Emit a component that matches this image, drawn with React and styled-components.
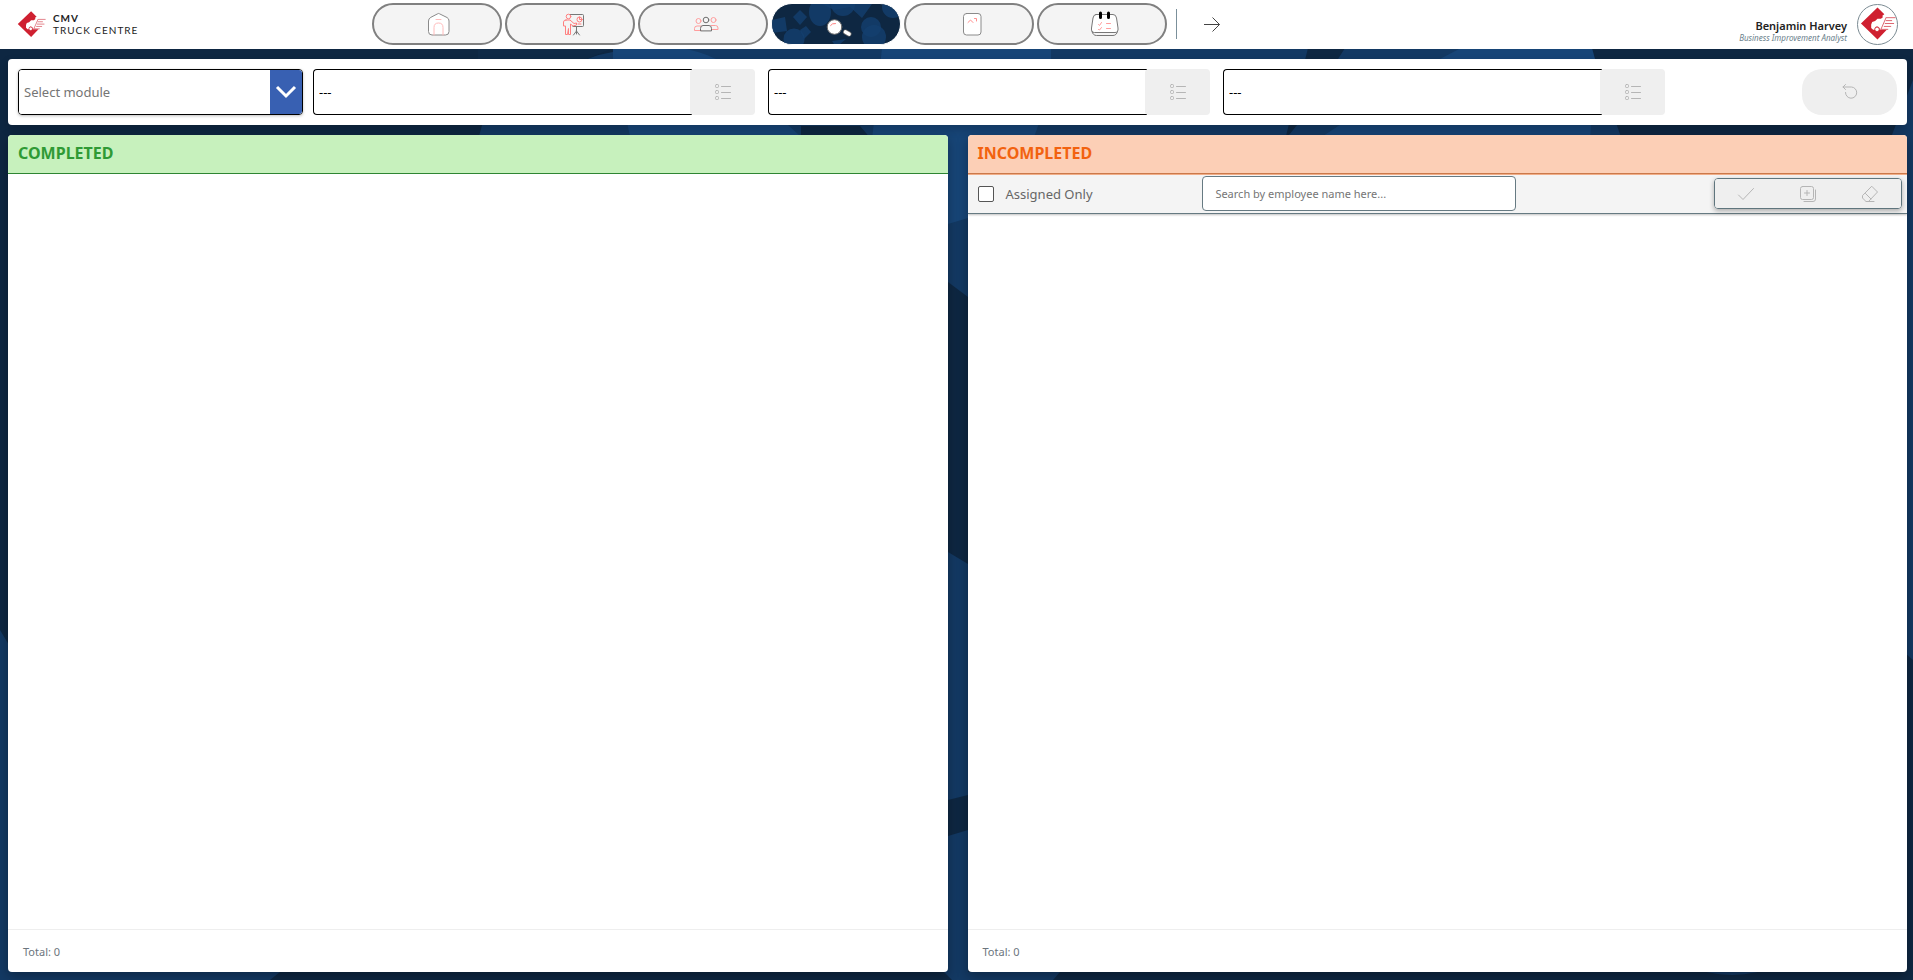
import React from "react";
import styled, { createGlobalStyle, css } from "styled-components";

const GlobalStyle = createGlobalStyle`
  *, *::before, *::after { box-sizing: border-box; }
  html, body, #root { height: 100%; }
  body {
    margin: 0;
    background: #0e2742;
    color: #222;
    font-family: "Noto Sans", "Open Sans", sans-serif;
    font-size: 13px;
  }
  button, input, select { font: inherit; }
`;

const Page = styled.div`
  position: relative;
  isolation: isolate;
  min-height: 100vh;
  display: flex;
  flex-direction: column;
`;

const Backdrop = styled.svg`
  position: absolute;
  inset: 0;
  width: 100%;
  height: 100%;
  z-index: -1;
`;

const Header = styled.header`
  display: grid;
  grid-template-columns: 354px 1fr auto;
  align-items: center;
  height: 49px;
  padding: 0 15px 1px 17px;
  background: #fff;
`;

const Brand = styled.a`
  display: flex;
  align-items: center;
  gap: 7px;
  color: #1d1d1d;
  text-decoration: none;
`;

const BrandName = styled.span`
  display: flex;
  flex-direction: column;
  font-family: Lato, sans-serif;
  font-size: 10px;
  line-height: 12px;
  letter-spacing: 1px;
`;

const Nav = styled.nav`
  display: flex;
  align-items: center;
  gap: 3px;
  padding-left: 1px;
`;

const NavButton = styled.button`
  position: relative;
  display: flex;
  align-items: center;
  justify-content: center;
  width: 130px;
  height: 42px;
  padding: 0 0 0 6px;
  border: 2px solid #808080;
  border-radius: 21px;
  background: #f4f4f4;
  overflow: hidden;
  ${(p) =>
    p.$active &&
    css`
      border: 1px solid #fff;
      background: #0e2742;
    `}
`;

const PillArt = styled.svg`
  position: absolute;
  inset: 0;
  width: 100%;
  height: 100%;
`;

const NavIcon = styled.svg`
  position: relative;
  width: 30px;
  height: 30px;
  fill: none;
  stroke-width: 1;
  stroke-linecap: round;
  stroke-linejoin: round;
`;

const Divider = styled.span`
  width: 1px;
  height: 30px;
  margin-left: 6px;
  background: #7b909b;
`;

const NextButton = styled.button`
  display: flex;
  margin-left: 22px;
  padding: 0;
  border: 0;
  background: none;
`;

const User = styled.div`
  display: flex;
  align-items: center;
  gap: 10px;
`;

const UserText = styled.div`
  display: flex;
  flex-direction: column;
  align-items: flex-end;
  padding-top: 13px;
`;

const UserName = styled.span`
  font-size: 11px;
  font-weight: 600;
  line-height: 14px;
`;

const UserRole = styled.span`
  font-size: 8px;
  font-style: italic;
  line-height: 10px;
  color: #6b818c;
`;

const Avatar = styled.span`
  display: flex;
  align-items: center;
  justify-content: center;
  width: 41px;
  height: 41px;
  border: 1px solid #7b8b93;
  border-radius: 50%;
`;

const Main = styled.main`
  flex: 1;
  display: flex;
  flex-direction: column;
  gap: 10px;
  padding: 10px 6px 8px 8px;
`;

const Filters = styled.form`
  display: grid;
  grid-template-columns: 285fr 445fr 445fr 445fr 219fr;
  gap: 10px;
  padding: 10px;
  border-radius: 4px;
  background: #fff;
  box-shadow: 0 4px 10px rgba(0, 0, 0, 0.2);
`;

const SelectBox = styled.div`
  position: relative;
  display: flex;
  height: 46px;
  border: 1px solid #000;
  border-radius: 4px;
  overflow: hidden;
  box-shadow: 0 1px 3px rgba(0, 0, 0, 0.25);
`;

const ModuleSelect = styled.select`
  flex: 1;
  appearance: none;
  padding: 0 5px;
  border: 0;
  background: #fff;
  color: #757575;
`;

const SelectArrow = styled.span`
  position: absolute;
  inset: 0 0 0 auto;
  display: flex;
  align-items: center;
  justify-content: center;
  width: 32px;
  background: #3860b2;
  pointer-events: none;
`;

const Field = styled.div`
  display: flex;
  height: 46px;
  padding-right: 3px;
`;

const FieldInput = styled.input`
  flex: 1;
  min-width: 0;
  padding: 0 5px;
  border: 1px solid #000;
  border-right: 0;
  border-radius: 4px 0 0 4px;
  background: #fff;
  color: #000;
`;

const FieldButton = styled.button`
  display: flex;
  align-items: center;
  justify-content: center;
  width: 65px;
  margin-left: -2px;
  padding: 0;
  border: 0;
  border-radius: 4px;
  background: #efefef;
`;

const ResetButton = styled.button`
  justify-self: end;
  display: flex;
  align-items: center;
  justify-content: center;
  width: 95px;
  height: 46px;
  padding: 0;
  border: 0;
  border-radius: 20px;
  background: #efefef;
`;

const Panels = styled.div`
  flex: 1;
  display: grid;
  grid-template-columns: 1fr 1fr;
  gap: 20px;
`;

const Panel = styled.section`
  display: flex;
  flex-direction: column;
  border-radius: 4px;
  background: #fff;
  overflow: hidden;
  box-shadow: 0 4px 12px rgba(0, 0, 0, 0.3);
`;

const tones = {
  done: { back: "#c7f1bd", ink: "#2f9a35", line: "#2e8532" },
  open: { back: "#fccfb6", ink: "#f2620f", line: "#cf7b4c" },
};

const PanelTitle = styled.h2`
  height: 39px;
  margin: 0;
  padding: 0 10px;
  border-bottom: 1px solid ${(p) => tones[p.$tone].line};
  background: ${(p) => tones[p.$tone].back};
  color: ${(p) => tones[p.$tone].ink};
  font-size: 16px;
  font-weight: 700;
  line-height: 36px;
`;

const Tools = styled.div`
  display: grid;
  grid-template-columns: 3fr 4fr 5fr;
  align-items: center;
  height: 40px;
  padding-bottom: 1px;
  border-top: 1px solid #f0ad88;
  border-bottom: 1px solid #667a82;
  background: #f4f4f4;
  box-shadow: 0 1px 2px rgba(0, 0, 0, 0.25);
`;

const CheckLabel = styled.label`
  display: flex;
  align-items: center;
  gap: 12px;
  padding-left: 10px;
  color: #666;
`;

const Check = styled.input`
  appearance: none;
  width: 16px;
  height: 16px;
  margin: 0;
  border: 1px solid #555;
  border-radius: 2px;
  background: #fff;
`;

const Search = styled.input`
  width: 100%;
  height: 35px;
  padding: 0 12px;
  border: 1px solid #667a82;
  border-radius: 4px;
  background: #fff;
  font-size: 11px;
  &::placeholder { color: #757575; opacity: 1; }
`;

const Actions = styled.div`
  justify-self: end;
  display: grid;
  grid-template-columns: repeat(3, 1fr);
  width: 48%;
  height: 31px;
  margin-right: 5px;
  border: 1px solid #5f757d;
  border-radius: 4px;
  overflow: hidden;
  box-shadow: 0 2px 5px rgba(0, 0, 0, 0.3);
`;

const ActionButton = styled.button`
  display: flex;
  align-items: center;
  justify-content: center;
  padding: 0;
  border: 0;
  background: #efefef;
`;

const MutedIcon = styled.svg`
  width: 18px;
  height: 18px;
  fill: none;
  stroke: #b5b5b5;
  stroke-width: 1;
  stroke-linecap: round;
  stroke-linejoin: round;
`;

const PanelBody = styled.div`
  flex: 1;
`;

const PanelFooter = styled.footer`
  height: 43px;
  padding: 0 15px;
  border-top: 1px solid #eee;
  color: #6c757d;
  font-size: 11px;
  line-height: 43px;
`;

const RED = "#ff9d9d";
const GREY = "#8a8a8a";

function BackdropArt() {
  return (
    <Backdrop viewBox="0 0 1913 980" preserveAspectRatio="none" aria-hidden="true">
      <g fill="#133963">
        <path d="M587 59Q613 49 650 48H1308L1285 140H1033L1025 220 948 282V140H872L860 126H801V140H478L500 59Z" />
        <path d="M1338 59L1345 48H1590L1622 140H1285L1317 100Z" />
        <path d="M948 282L968 297V135H948Z" />
        <path d="M948 552L968 564V795L948 800Z" />
        <path d="M948 836L968 830V972H1060L1053 980H952L944 972Z" />
        <path d="M0 630L12 650V972H280L270 980H0Z" />
        <path d="M1913 80L1890 140V640L1913 660Z" />
        <ellipse cx="1732" cy="940" rx="64" ry="35" />
      </g>
      <path d="M478 100V48H613L587 59 570 90V100Z" fill="#0f2a47" />
      <g fill="#174577">
        <path d="M613 48H680Q700 51 716 59L800 136H630L613 60Z" />
        <path d="M882 48H1051V90L1033 140H872Z" />
        <path d="M1461 48H1592L1595 59 1590 140H1317L1440 59Z" />
        <path d="M948 135H968V218L948 224Z" />
      </g>
    </Backdrop>
  );
}

function Emblem({ size }) {
  return (
    <svg width={size} height={size} viewBox="0 0 37 36" aria-hidden="true">
      <path
        fill="#cf2030"
        d="M18 1L25 8 23 9.500 23.500 11 21.500 12.500H18L15.500 15 12.500 16 11.500 18.500V22L13.500 24H15Q15 20.500 17.500 20.500T20.500 24H27.500L18 34 1 17.500Z"
      />
      <circle cx="17.500" cy="23.500" r="2.300" fill="#fff" stroke="#cf2030" strokeWidth="0.800" />
      <g stroke="#d9525e" strokeWidth="0.900" fill="none">
        <path d="M27 11.500H36.500M26.500 14.500H33M25.500 17.500H35M24.500 20.500H32M21 23.500H29" />
        <path d="M27 11L21.500 23.500" />
      </g>
    </svg>
  );
}

function HomeIcon() {
  return (
    <NavIcon viewBox="0 0 30 30" aria-hidden="true">
      <path d="M12.500 4.800Q13.500 4 14.500 4.800L22 8.500Q24 9.500 24 12V22.500Q24 26 20.500 26H7Q3.500 26 3.500 22.500V12Q3.500 9.500 5.500 8.500Z" stroke={GREY} fill="#fff" />
      <path d="M9 26V18.500Q9 14 13.500 14T18 18.500V26M11 10.500H16" stroke="#ffbcbc" />
    </NavIcon>
  );
}

function TrainingIcon() {
  return (
    <NavIcon viewBox="0 0 30 30" aria-hidden="true">
      <path d="M12 5.500H24.500Q25.500 5.500 25.500 6.500V16.500Q25.500 17.500 24.500 17.500H15M18.500 18V22L15.500 26M18.500 22L21.500 26M18.500 22V25" stroke="#777" />
      <circle cx="10.500" cy="7.500" r="2.300" stroke="#ff7f7f" />
      <path d="M8 11H12L16 14.500 18.500 14V16L15 17 12.500 15V25.500H10.500V19.500L9.500 25.500H7.500V17H5.500V13Q5.500 11 8 11Z" stroke="#ff7f7f" />
      <circle cx="21.500" cy="10.500" r="2.500" stroke="#ff7f7f" />
      <path d="M21.500 8V10.500H24M20 15H23" stroke="#ff7f7f" />
    </NavIcon>
  );
}

function TeamIcon() {
  return (
    <NavIcon viewBox="0 0 30 30" aria-hidden="true">
      <g stroke={RED}>
        <circle cx="7.500" cy="12" r="2.500" />
        <circle cx="22.500" cy="11" r="2.500" />
        <path d="M10 21.500H3.500V19.500Q3.500 17 6 17H10M20 16.500H24.500Q27 16.500 27 19V20.500H21" />
      </g>
      <g stroke="#6f6f6f">
        <circle cx="15" cy="11" r="2.800" />
        <path d="M9.500 21.500V19.500Q9.500 16.500 12 16.500H18Q20.500 16.500 20.500 19.500V21.500Z" />
      </g>
    </NavIcon>
  );
}

function SearchIcon() {
  return (
    <NavIcon viewBox="0 0 30 30" aria-hidden="true">
      <circle cx="10.500" cy="18" r="7.300" fill="#fff" stroke="#6b6b6b" />
      <path d="M6.500 16.500Q8 14 11.500 14.500" stroke="#ff7f7f" />
      <path d="M21.500 23L25 25" stroke="#6b6b6b" strokeWidth="5" />
      <path d="M21.500 23L25 25" stroke="#fff" strokeWidth="3.600" />
    </NavIcon>
  );
}

function DocumentIcon() {
  return (
    <NavIcon viewBox="0 0 30 30" aria-hidden="true">
      <rect x="6.500" y="4.500" width="17.500" height="21.500" rx="3" fill="#fff" stroke={GREY} />
      <path d="M11 13.500L13.500 11 16 13.500M17.500 9.500H19.500V12" stroke="#ff8d8d" />
    </NavIcon>
  );
}

function CalendarIcon() {
  return (
    <NavIcon viewBox="0 0 30 30" aria-hidden="true">
      <path d="M6 5.500H23Q26 5.500 26.500 9L28 19Q28.500 23.500 25 23.500H4.500Q1 23.500 1.500 19L3 9Q3.500 5.500 6 5.500Z" fill="#fff" stroke="#777" />
      <path d="M2 22.500Q3 26.500 6.500 26.500H23Q26.500 26.500 27.500 22.500" stroke="#777" />
      <path d="M10.500 4V8.500M18.500 4V8.500" stroke="#000" strokeWidth="3" />
      <path d="M8.500 15.500L9.500 16.500 11.500 13.500M8.500 20.500L9.500 21 11.500 18.500M16.500 14.500H20.500M16.500 19.500H20.500" stroke={RED} />
    </NavIcon>
  );
}

function ActivePillArt() {
  return (
    <PillArt viewBox="0 0 128 40" preserveAspectRatio="none" aria-hidden="true">
      <g fill="#14406f" fillOpacity="0.800">
        <path d="M0 16L13 13 15 27 0 29Z" />
        <path d="M28 6L35 13 28 21 21 13Z" />
        <circle cx="22" cy="35" r="10.500" />
        <path d="M28 26L34 22 39 28 32 35Z" />
        <ellipse cx="48" cy="8" rx="11" ry="14" />
        <circle cx="71" cy="0" r="12" />
        <path d="M50 0H100L90 14 78 3 62 6Z" />
        <circle cx="99" cy="23" r="10" />
        <ellipse cx="102" cy="33" rx="12" ry="12" />
        <circle cx="121" cy="3" r="11" />
        <path d="M60 37L74 35 68 40H62Z" />
      </g>
    </PillArt>
  );
}

const ListIcon = () => (
  <MutedIcon viewBox="0 0 18 18" aria-hidden="true">
    <rect x="1.500" y="1.500" width="3" height="3" rx="1" />
    <rect x="1.500" y="7.500" width="3" height="3" rx="1" />
    <rect x="1.500" y="13.500" width="3" height="3" rx="1" />
    <path d="M7.500 3.500H16.500M7.500 9.500H16.500M7.500 15.500H16.500" />
  </MutedIcon>
);

const UndoIcon = () => (
  <MutedIcon viewBox="0 0 18 18" aria-hidden="true">
    <path d="M4.500 1.500L2 4 4.500 6.500M2 4H10.500A5.600 5.600 0 1 1 4.500 9.500" />
  </MutedIcon>
);

const CheckIcon = () => (
  <MutedIcon viewBox="0 0 18 18" aria-hidden="true">
    <path d="M1.500 10L6 14.500 16.500 3.500" />
  </MutedIcon>
);

const AddIcon = () => (
  <MutedIcon viewBox="0 0 18 18" aria-hidden="true">
    <rect x="1.500" y="1.500" width="13" height="13" rx="2" />
    <path d="M8 5.500V10.500M5.500 8H10.500M16.500 5V14Q16.500 16.500 14 16.500H5" />
  </MutedIcon>
);

const EraserIcon = () => (
  <MutedIcon viewBox="0 0 18 18" aria-hidden="true">
    <path d="M11 1.500L16.500 7 7.500 16.500H5L1.500 13V11ZM4.500 8.500L10 14M5 16.500H13" />
  </MutedIcon>
);

const navItems = [
  { label: "Home", Icon: HomeIcon },
  { label: "Training", Icon: TrainingIcon },
  { label: "Team", Icon: TeamIcon },
  { label: "Search", Icon: SearchIcon, active: true },
  { label: "Documents", Icon: DocumentIcon },
  { label: "Schedule", Icon: CalendarIcon },
];

const fields = ["First filter", "Second filter", "Third filter"];

export default function App() {
  return (
    <>
      <GlobalStyle />
      <Page>
        <BackdropArt />
        <Header>
          <Brand href="#">
            <Emblem size={29} />
            <BrandName>
              <b>CMV</b>
              <span>TRUCK CENTRE</span>
            </BrandName>
          </Brand>
          <Nav>
            {navItems.map(({ label, Icon, active }) => (
              <NavButton key={label} type="button" aria-label={label} $active={active}>
                {active && <ActivePillArt />}
                <Icon />
              </NavButton>
            ))}
            <Divider />
            <NextButton type="button" aria-label="Next">
              <svg width="20" height="20" viewBox="0 0 20 20" fill="none" stroke="#444" aria-hidden="true">
                <path d="M2 10.500H17.500M10.500 3.500L17.500 10.500 10.500 17.500" />
              </svg>
            </NextButton>
          </Nav>
          <User>
            <UserText>
              <UserName>Benjamin Harvey</UserName>
              <UserRole>Business Improvement Analyst</UserRole>
            </UserText>
            <Avatar>
              <Emblem size={36} />
            </Avatar>
          </User>
        </Header>
        <Main>
          <Filters>
            <SelectBox>
              <ModuleSelect aria-label="Module" defaultValue="">
                <option value="">Select module</option>
              </ModuleSelect>
              <SelectArrow>
                <svg width="22" height="14" viewBox="0 0 22 14" fill="none" stroke="#fff" strokeWidth="3" aria-hidden="true">
                  <path d="M2 2L11 11 20 2" />
                </svg>
              </SelectArrow>
            </SelectBox>
            {fields.map((label) => (
              <Field key={label}>
                <FieldInput aria-label={label} defaultValue="---" readOnly />
                <FieldButton type="button" aria-label={`${label} list`} disabled>
                  <ListIcon />
                </FieldButton>
              </Field>
            ))}
            <ResetButton type="button" aria-label="Reset" disabled>
              <UndoIcon />
            </ResetButton>
          </Filters>
          <Panels>
            <Panel>
              <PanelTitle $tone="done">COMPLETED</PanelTitle>
              <PanelBody />
              <PanelFooter>Total: 0</PanelFooter>
            </Panel>
            <Panel>
              <PanelTitle $tone="open">INCOMPLETED</PanelTitle>
              <Tools>
                <CheckLabel>
                  <Check type="checkbox" />
                  Assigned Only
                </CheckLabel>
                <Search type="text" aria-label="Search employees" placeholder="Search by employee name here..." />
                <Actions>
                  <ActionButton type="button" aria-label="Complete" disabled>
                    <CheckIcon />
                  </ActionButton>
                  <ActionButton type="button" aria-label="Add" disabled>
                    <AddIcon />
                  </ActionButton>
                  <ActionButton type="button" aria-label="Clear" disabled>
                    <EraserIcon />
                  </ActionButton>
                </Actions>
              </Tools>
              <PanelBody />
              <PanelFooter>Total: 0</PanelFooter>
            </Panel>
          </Panels>
        </Main>
      </Page>
    </>
  );
}
